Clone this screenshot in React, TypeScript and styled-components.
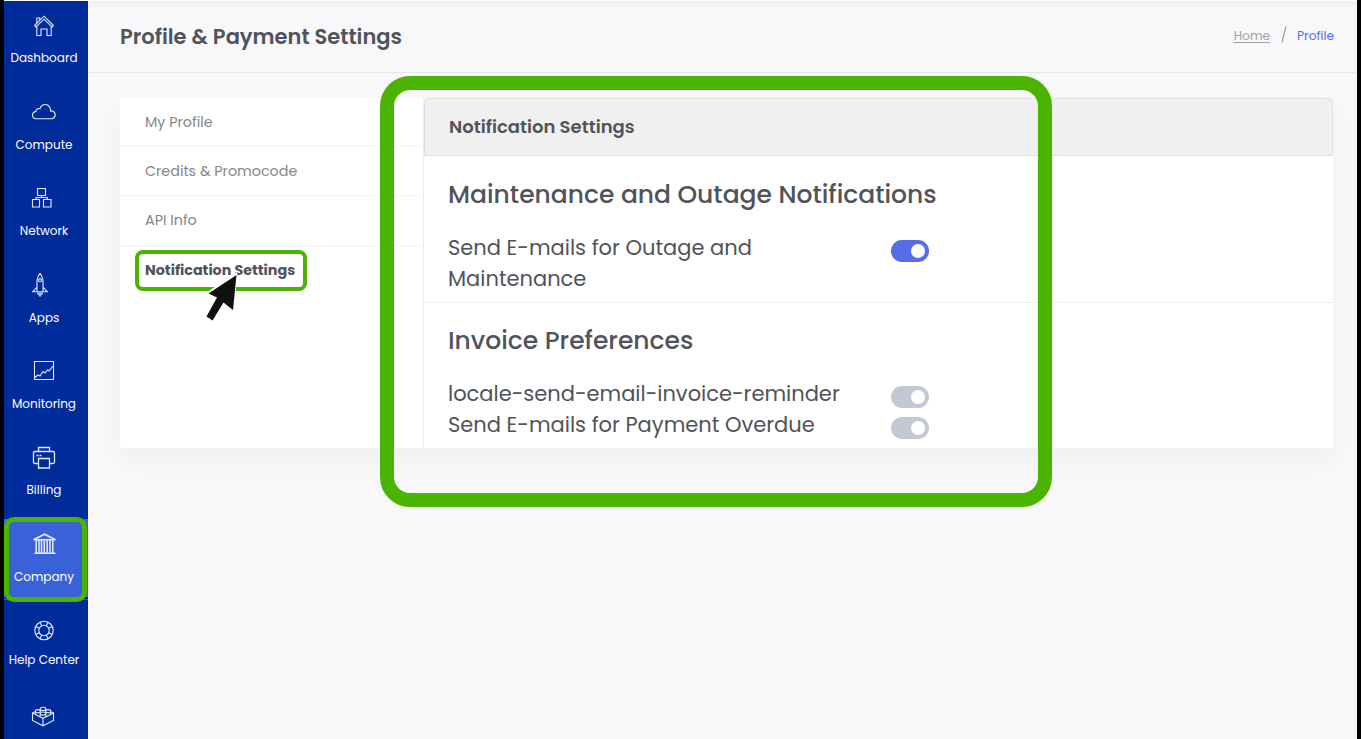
import React from "react";
import styled, { createGlobalStyle } from "styled-components";

const GlobalStyle = createGlobalStyle`
  * { box-sizing: border-box; }
  body { margin: 0; background: #000; font-family: Poppins, Inter, sans-serif; color: #50535a; }
`;

const Screen = styled.div`
  position: relative;
  display: flex;
  width: 1361px;
  height: 739px;
  padding: 1px 4px 0;
  overflow: hidden;
  background: linear-gradient(90deg, #000 4px, #fff 4px, #fff 1357px, #000 1357px);
`;

const Sidebar = styled.nav`
  width: 84px;
  flex: none;
  height: 738px;
  overflow: hidden;
  background: #002b9b;
`;

const NavItem = styled.a<{ $active?: boolean; $near?: boolean }>`
  display: flex;
  flex-direction: column;
  align-items: center;
  height: 78px;
  margin-bottom: 8.4px;
  padding: 13px 4px 0 0;
  gap: ${(p) => (p.$near ? 7 : 10.4)}px;
  color: #fff;
  background: ${(p) => (p.$active ? "#3a62d8" : "transparent")};
  box-shadow: ${(p) => (p.$active ? "0 2px 0 #002b9b, 0 3px 0 #3156bd" : "none")};
`;

const NavIcon = styled.svg`
  width: 28px;
  height: 24px;
  flex: none;
  fill: none;
  stroke: #e4ebff;
  stroke-width: 1.1;
`;

const NavLabel = styled.span`
  font-size: 12px;
  line-height: 20px;
  white-space: nowrap;
`;

const Main = styled.main`
  flex: 1;
  min-width: 0;
  background: #f8f8fb;
`;

const Header = styled.header`
  display: flex;
  align-items: center;
  justify-content: space-between;
  height: 72px;
  padding: 0 23px 1px 32px;
  border-bottom: 1px solid #e6e6eb;
  background: linear-gradient(#f1f1f4, #f8f8fb 9px);
`;

const Title = styled.h1`
  margin: 0;
  font-size: 21px;
  font-weight: 600;
`;

const Crumbs = styled.div`
  display: flex;
  align-items: center;
  padding-bottom: 1px;
  font-size: 12.2px;
  color: #a0a1a5;
`;

const HomeLink = styled.a`
  text-decoration: underline;
  text-underline-offset: 2px;
`;

const Slash = styled.svg`
  width: 6px;
  height: 18px;
  margin: 0 10px 2px 11px;
  stroke: #999;
  stroke-width: 1.2;
`;

const Current = styled.span`
  color: #556ee6;
`;

const Card = styled.section`
  display: flex;
  width: 1213px;
  height: 350px;
  margin: 25px 0 0 32px;
  border-radius: 4px;
  background: #fff;
  box-shadow: 0 12px 24px rgba(0, 0, 0, 0.035);
`;

const Menu = styled.div`
  width: 304px;
  flex: none;
  border-right: 1px solid #efeff1;
`;

const MenuItem = styled.div<{ $active?: boolean }>`
  display: flex;
  align-items: center;
  height: ${(p) => (p.$active ? 50 : 49.2)}px;
  padding-top: ${(p) => (p.$active ? 1 : 0)}px;
  padding-left: 25px;
  font-size: 14.3px;
  font-weight: ${(p) => (p.$active ? 700 : 400)};
  color: ${(p) => (p.$active ? "#50535a" : "#858689")};
  border-bottom: 1px solid ${(p) => (p.$active ? "transparent" : "#f3f3f4")};
`;

const Panel = styled.div`
  flex: 1;
`;

const PanelHead = styled.h2`
  display: flex;
  align-items: center;
  height: 58px;
  margin: 0 0 1px;
  padding: 0 24px;
  font-size: 18px;
  line-height: 26px;
  font-weight: 600;
  background: #f0f0f0;
  border: 1px solid #e1e1e2;
  border-radius: 4px 4px 0 0;
`;

const Group = styled.div<{ $last?: boolean }>`
  height: 146px;
  padding: 20px 24px 0;
  border-bottom: 1px solid ${(p) => (p.$last ? "transparent" : "#eeeef0")};
`;

const GroupTitle = styled.h3`
  margin: 0 0 19px;
  font-size: 25px;
  line-height: 36px;
  font-weight: 500;
`;

const Setting = styled.div`
  display: flex;
  align-items: flex-start;
`;

const SettingText = styled.div`
  width: 443px;
  font-size: 21px;
  line-height: 31px;
  white-space: pre;
`;

const Toggle = styled.span<{ $on?: boolean }>`
  display: flex;
  align-items: center;
  justify-content: flex-end;
  width: 38px;
  height: 22px;
  margin-top: 8px;
  padding-right: 4px;
  border-radius: 11px;
  background: ${(p) => (p.$on ? "#556ee6" : "#c3c9d4")};
  &::after {
    content: "";
    width: 14px;
    height: 14px;
    border-radius: 50%;
    background: #fff;
  }
`;

const Highlight = styled.div<{ $x: number; $y: number; $w: number; $h: number; $b: number; $r: number }>`
  position: absolute;
  left: ${(p) => p.$x}px;
  top: ${(p) => p.$y}px;
  width: ${(p) => p.$w}px;
  height: ${(p) => p.$h}px;
  border: ${(p) => p.$b}px solid #4ab500;
  border-radius: ${(p) => p.$r}px;
  pointer-events: none;
`;

const Pointer = styled.svg`
  position: absolute;
  left: 200px;
  top: 268px;
  width: 46px;
  height: 56px;
`;

const icons = {
  home: (
    <>
      <path d="M4.500 11.500 14 2.200l9.500 9.300M4.500 11.500l1.500 1.500 8-7.800 8 7.800 1.500-1.500" />
      <path d="M6.800 12.500v9h4.200v-6.500h6v6.500h4.200v-9M6.800 9V4h3v2" />
    </>
  ),
  cloud: <path d="M6.500 18.700h15.300a3.900 3.900 0 0 0 .6-7.600c-.6-.2-1.400-.2-1.800 0 .2-3.900-2.400-6.600-5.300-6.600-2.600 0-4.600 1.700-5.300 4.200-2-.6-4 .6-4 2.700-1.800.3-3.500 1.700-3.500 3.800 0 2 1.700 3.500 4 3.500Z" />,
  network: (
    <path d="M7.500 1.500h8v7h-8zM2.500 12.500h7v7.500h-7zM13.500 12.500h7.500v7.500h-7.500zM11.500 8.500v2M6 12.500v-2h11.300v2" />
  ),
  rocket: (
    <>
      <path d="M7 18.800V7.500Q7.500 3 10 .3q2.500 2.700 3 7.200v11.300zM7 14l-4.300 4.800H7M13 14l4.300 4.800H13" />
      <circle cx="10" cy="7.200" r="1.600" />
      <path d="M7 20.600h6M8.800 22.600h2.400" stroke="#b3c2ee" strokeWidth="2" />
    </>
  ),
  chart: <path d="M4.500 1.500h19v18h-19zM5 17.500l3-2.500 2 1 3-4.500 2 1.500 2.500-3 1.500 1L23 6" />,
  printer: (
    <>
      <path d="M8.500 5.500v-4h11v4M8.500 17.500h-3.500q-1.500 0-1.500-1.500v-9q0-1.500 1.500-1.500h18q1.500 0 1.500 1.500v9q0 1.500-1.500 1.500h-3.500M8.500 12.500h11v9.500h-11z" strokeWidth="1.300" />
      <path d="M6.500 9.500h2M9.500 9.500h2" strokeWidth="1.500" />
    </>
  ),
  bank: (
    <>
      <path d="M3.500 7.800 14.500 2.200 25.500 7.800zM4.500 21.300h21" strokeWidth="1.600" />
      <path d="M6.200 8v13M9 8v13M11.500 8v13M14.300 8v13M17.200 8v13M20 8v13M22.800 8v13" strokeWidth="1.500" />
    </>
  ),
  help: (
    <>
      <circle cx="14" cy="11.500" r="9.200" />
      <circle cx="14" cy="11.500" r="5.200" />
      <path d="M10 3.200l1.700 3.700M18 3.200l-1.700 3.700M10 19.800l1.700-3.700M18 19.800l-1.700-3.700M5.500 7.500l3.900 1.700M5.500 15.500l3.900-1.700M22.500 7.500l-3.900 1.700M22.500 15.500l-3.900-1.700" />
    </>
  ),
  brick: (
    <>
      <path d="M4.500 7 2.500 7.800v7.700L13 20.800l10.500-5.300V7.800L21.500 7M2.500 8 13 13.300 23.500 8M13 13.300v7.500" />
      <path d="M10.200 4v2M15.800 4v2M5.200 6.500v2.400M20.800 6.500v2.400M10.200 9v2.500M15.800 9v2.500" />
      <ellipse cx="13" cy="3.900" rx="2.800" ry="1.600" />
      <ellipse cx="7.800" cy="6.200" rx="2.600" ry="1.600" />
      <ellipse cx="18.200" cy="6.200" rx="2.600" ry="1.600" />
      <ellipse cx="13" cy="8.600" rx="2.800" ry="1.600" />
    </>
  ),
};

const nav: { icon: keyof typeof icons; label: string; active?: boolean; near?: boolean }[] = [
  { icon: "home", label: "Dashboard" },
  { icon: "cloud", label: "Compute" },
  { icon: "network", label: "Network" },
  { icon: "rocket", label: "Apps" },
  { icon: "chart", label: "Monitoring" },
  { icon: "printer", label: "Billing" },
  { icon: "bank", label: "Company", active: true },
  { icon: "help", label: "Help Center", near: true },
  { icon: "brick", label: "" },
];

export default function App() {
  return (
    <>
      <GlobalStyle />
      <Screen>
        <Sidebar>
          {nav.map((n) => (
            <NavItem key={n.icon} $active={n.active} $near={n.near}>
              <NavIcon viewBox="0 0 28 24">{icons[n.icon]}</NavIcon>
              <NavLabel>{n.label}</NavLabel>
            </NavItem>
          ))}
        </Sidebar>
        <Main>
          <Header>
            <Title>Profile &amp; Payment Settings</Title>
            <Crumbs>
              <HomeLink>Home</HomeLink>
              <Slash viewBox="0 0 6 18">
                <path d="M5 .5 1 16.500" />
              </Slash>
              <Current>Profile</Current>
            </Crumbs>
          </Header>
          <Card>
            <Menu>
              <MenuItem>My Profile</MenuItem>
              <MenuItem>Credits &amp; Promocode</MenuItem>
              <MenuItem>API Info</MenuItem>
              <MenuItem $active>Notification Settings</MenuItem>
            </Menu>
            <Panel>
              <PanelHead>Notification Settings</PanelHead>
              <Group>
                <GroupTitle>Maintenance and Outage Notifications</GroupTitle>
                <Setting>
                  <SettingText>{"Send E-mails for Outage and\nMaintenance"}</SettingText>
                  <Toggle $on />
                </Setting>
              </Group>
              <Group $last>
                <GroupTitle>Invoice Preferences</GroupTitle>
                <Setting>
                  <SettingText>locale-send-email-invoice-reminder</SettingText>
                  <Toggle />
                </Setting>
                <Setting>
                  <SettingText>Send E-mails for Payment Overdue</SettingText>
                  <Toggle />
                </Setting>
              </Group>
            </Panel>
          </Card>
        </Main>
        <Highlight $x={4} $y={517} $w={83} $h={85} $b={5} $r={10} />
        <Highlight $x={135} $y={250} $w={172} $h={41} $b={4} $r={8} />
        <Highlight $x={380} $y={76} $w={672} $h={431} $b={14.5} $r={30} />
        <Pointer viewBox="200 268 46 56">
          <path d="M237.500 271.500 206 293 215 297.500 205.500 317 212.500 321.500 223 305 234 312Z" fill="#fff" />
          <path d="M236.500 275 208.500 293.500 217 297.500 206.500 316.500 212.500 320.500 223.500 302.500 233 310Z" fill="#11100c" />
        </Pointer>
      </Screen>
    </>
  );
}
